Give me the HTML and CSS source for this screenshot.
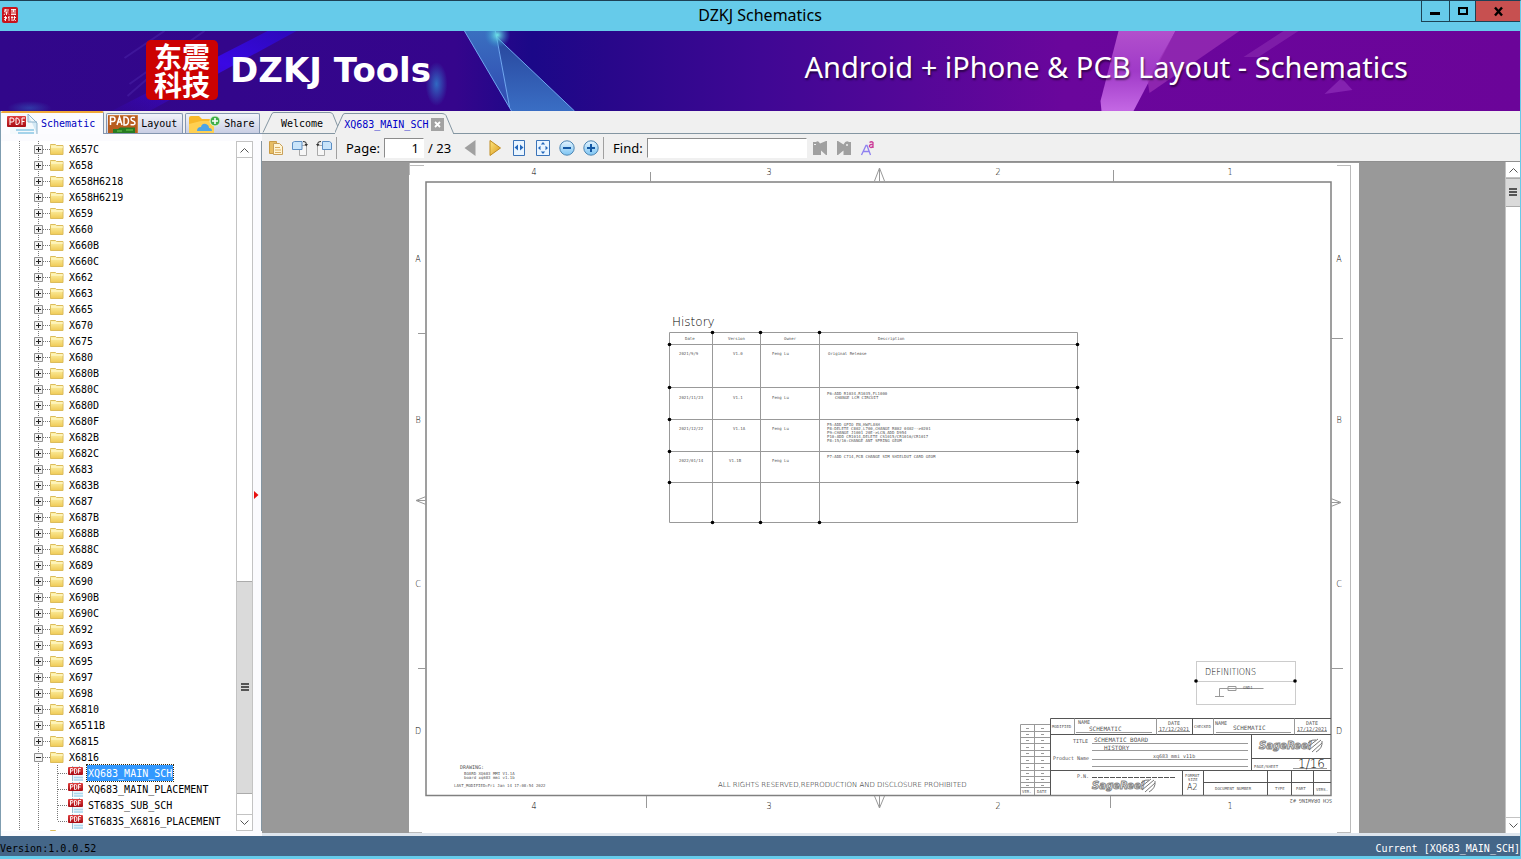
FILE: index.html
```html
<!DOCTYPE html>
<html lang="en">
<head>
  <meta charset="UTF-8">
  <title>DZKJ Schematics</title>
  <meta name="viewport" content="width=device-width,initial-scale=1">
  <link rel="stylesheet" href="styles.css">
</head>
<body>
  <svg class="defs" width="0" height="0" aria-hidden="true">
    <defs>
      <linearGradient id="g-folder" x1="0" y1="0" x2="0" y2="1"><stop offset="0" stop-color="#fff6b0"/><stop offset="1" stop-color="#efca55"/></linearGradient>
      <linearGradient id="g-blue" x1="0" y1="0" x2="0" y2="1"><stop offset="0" stop-color="#e4f4ff"/><stop offset="1" stop-color="#7cc4f2"/></linearGradient>
      <linearGradient id="g-gold" x1="0" y1="0" x2="1" y2="1"><stop offset="0" stop-color="#ffe680"/><stop offset="1" stop-color="#d99a1c"/></linearGradient>
      <linearGradient id="g-red" x1="0" y1="0" x2="0" y2="1"><stop offset="0" stop-color="#e04040"/><stop offset="1" stop-color="#a80c14"/></linearGradient>
    </defs>
    <symbol id="i-folder" viewBox="0 0 14 12">
      <path d="M.5 2.500V1.500h5l1 1h6.500v9H.5z" fill="url(#g-folder)" stroke="#dcbc5c"/>
      <path d="M1 4h12" stroke="#fffbd8"/>
    </symbol>
    <symbol id="i-pdf" viewBox="0 0 16 16">
      <path d="M4 1h7l4 4v11H4z" fill="#edf6fb"/>
      <path d="M11 1l4 4M4.500 1v15" stroke="#9bbccd" fill="none"/>
      <path d="M6 12.500h9M6 15h9" stroke="#a9d8ee" stroke-width="1.500"/>
      <rect x="0" y="2" width="15" height="8" rx="1" fill="url(#g-red)"/>
      <path d="M2.500 8.500v-5h1.500q1 0 1 1.200T4 6H2.500M6.500 3.500v5h1q1.500 0 1.500-2.500T7.500 3.500zM10.500 8.500v-5H13M10.500 6H12.500" stroke="#fff" fill="none" stroke-width=".9"/>
    </symbol>
  </svg>

  <header class="titlebar">
    <svg class="app-icon" width="16" height="16" viewBox="0 0 16 16" aria-hidden="true">
      <rect width="16" height="16" rx="2" fill="#c8141c"/>
      <path d="M2 3h5M4 2L2.500 5h4M4.500 5v3M3 6.500L2 8M6 6.500l1 1M9 2.500h5M9 4h5M11.500 2v3M9 6h5M9 7.500h5M2 10.500h3M3.500 9v5M2 13l3-2M6 10l1 1M7 9v5M9 10.500h2M10 9v5M11.500 10.500H14M12.500 9v3L10.800 14M11.800 12l2 2" stroke="#fff" stroke-width=".9" fill="none"/>
    </svg>
    <h1>DZKJ Schematics</h1>
    <div class="win-buttons">
      <button class="win-btn" aria-label="Minimize"><svg width="27" height="20"><path d="M8 12.500h10" stroke="#000" stroke-width="3"/></svg></button>
      <button class="win-btn" aria-label="Maximize"><svg width="25" height="20"><path d="M9 7h8v6H9z" stroke="#000" stroke-width="2" fill="none"/></svg></button>
      <button class="win-btn close" aria-label="Close"><svg width="44" height="20"><path d="M19 6.500l7 8M26 6.500l-7 8" stroke="#000" stroke-width="2.400"/></svg></button>
    </div>
  </header>

  <div class="banner">
    <svg class="banner-art" viewBox="0 31 1521 80" preserveAspectRatio="xMidYMid slice" aria-hidden="true">
      <defs>
        <linearGradient id="g-banner"><stop offset="0" stop-color="#31078a"/><stop offset=".3" stop-color="#35058c"/><stop offset=".35" stop-color="#1b0888"/><stop offset=".4" stop-color="#28078a"/><stop offset=".5" stop-color="#3f0794"/><stop offset=".6" stop-color="#540798"/><stop offset=".7" stop-color="#6a069c"/><stop offset="1" stop-color="#6b0499"/></linearGradient>
        <linearGradient id="g-beam" x1="1" y1="0" x2="0" y2="1"><stop offset="0" stop-color="#2a0ad8" stop-opacity=".6"/><stop offset=".4" stop-color="#3a08e4"/><stop offset="1" stop-color="#3a08d0" stop-opacity=".1"/></linearGradient>
        <linearGradient id="g-shard" x1="0" y1="0" x2="0" y2="1"><stop offset="0" stop-color="#3a6fc0"/><stop offset="1" stop-color="#3048b0"/></linearGradient>
        <linearGradient id="g-shard2" x1="0" y1="0" x2="0" y2="1"><stop offset="0" stop-color="#27459c"/><stop offset="1" stop-color="#3a6ec4"/></linearGradient>
        <linearGradient id="g-pink" x1="0" y1="0" x2="0" y2="1"><stop offset="0" stop-color="#b250cc"/><stop offset=".5" stop-color="#a03ac8"/><stop offset="1" stop-color="#c468e4"/></linearGradient>
        <radialGradient id="g-glow"><stop offset="0" stop-color="#3074c8" stop-opacity=".9"/><stop offset="1" stop-color="#3074c8" stop-opacity="0"/></radialGradient>
        <radialGradient id="g-spark"><stop offset="0" stop-color="#6fe6e8"/><stop offset="1" stop-color="#3090d0" stop-opacity="0"/></radialGradient>
      </defs>
      <rect y="31" width="1521" height="80" fill="url(#g-banner)"/>
      <path d="M268 31H297L150 111H112z" fill="url(#g-beam)"/>
      <path d="M205 31L130 84M165 31L125 58M188 44L128 96" stroke="#5632b8" stroke-width="2" opacity=".35"/>
      <ellipse cx="30" cy="108" rx="22" ry="7" fill="url(#g-glow)" opacity=".5"/>
      <ellipse cx="437" cy="84" rx="11" ry="22" fill="url(#g-glow)"/>
      <path d="M465 31H496L510 107 512 111z" fill="url(#g-shard)"/>
      <path d="M497 37L575 111H512L510 107z" fill="url(#g-shard2)"/>
      <path d="M465 31L512 111M497 37L575 111M496 31L510 107" stroke="#70a8f0" fill="none"/>
      <circle cx="498" cy="35" r="13" fill="url(#g-spark)"/>
      <path d="M1119 31H1176L1134 111H1102L1101 101z" fill="url(#g-pink)"/>
      <path d="M1176 31H1240L1150 93 1148 80z" fill="#9a30b6" opacity=".75"/>
      <path d="M1284 31H1299L1259 57H1244z" fill="#8626ae" opacity=".7"/>
      <path d="M1325 94L1342 78 1353 90z" fill="#8422b0"/>
    </svg>
    <div class="brand">
      <div class="logo" lang="zh">东震<br>科技</div>
      <span class="brand-name">DZKJ Tools</span>
    </div>
    <span class="slogan">Android + iPhone &amp; PCB Layout - Schematics</span>
  </div>

  <main class="workspace">
    <section class="sidebar">
      <nav class="side-tabs">
        <button class="side-tab active">
          <svg width="32" height="20" viewBox="0 0 32 20"><path d="M4 0h19l8 9v11H4z" fill="#f4f9fc"/><path d="M22 0l9 9v11M22 0v8h9" stroke="#8fb4cc" fill="#d4e9f5"/><path d="M10 16h18M12 19h16" stroke="#a5d3ea" stroke-width="2"/><rect x="1" y="2" width="19" height="11" rx="1" fill="url(#g-red)"/><path d="M4 11V4h2q2 0 2 2t-2 2H4M10 4v6.500h1q2.500 0 2.500-3T11 4zM16 11V4h3M16 7.500h2.500" stroke="#fff" fill="none"/></svg>
          Schematic
        </button>
        <button class="side-tab">
          <svg width="30" height="18" viewBox="0 0 30 18"><rect width="30" height="18" fill="#b85d20"/><path d="M0 0h30v18" stroke="#e5a25c" fill="none"/><path d="M5 18v-4h5l2-1.500h15V18" fill="#287c22"/><path d="M9 16h5M18 15h7" stroke="#70cc50"/><path d="M2.500 10V2H5q2 0 2 2.200T5 6.500H2.500M9 10l2.500-8L14 10M10 7h3M16 2v8h1q3.500 0 3.500-4T17 2zM27 2.500Q23 1.500 23 4q0 1.500 2 2t2 2q0 2.500-4.500 1.500" stroke="#fff" stroke-width="1.500" fill="none"/></svg>
          Layout
        </button>
        <button class="side-tab share">
          <svg width="32" height="18" viewBox="0 0 32 18"><path d="M0 18V3q0-2 2-2h8l3 3h9q3 0 3 3v11z" fill="#f8b82a"/><path d="M0 18V9l12-3h13v12z" fill="#ffd052"/><path d="M8 16q0-4 4-4 1-4 5-3 3 1 3 4 3 0 3 3z" fill="#4ea4e4"/><circle cx="26" cy="6" r="5" fill="#3fae49" stroke="#dff5d8"/><path d="M26 3v6M23 6h6" stroke="#fff" stroke-width="1.600"/></svg>
          Share
        </button>
      </nav>
      <div class="tree-wrap">
        <div class="tree" id="tree"></div>
        <div class="scrollbar">
          <button class="sb-btn" aria-label="Scroll up"><svg width="9" height="6"><path d="M.5 5.500L4.500 1.500l4 4" stroke="#555" fill="none"/></svg></button>
          <div class="sb-space"></div>
          <div class="sb-thumb"></div>
          <div class="sb-end"></div>
          <button class="sb-btn" aria-label="Scroll down"><svg width="9" height="6"><path d="M.5 .5l4 4 4-4" stroke="#555" fill="none"/></svg></button>
        </div>
        <div class="splitter"><svg width="5" height="8"><path d="M0 0l4.500 4L0 8z" fill="#e81010"/></svg></div>
      </div>
    </section>

    <section class="document">
      <nav class="doc-tabs">
        <button class="doc-tab">
          <svg class="doc-tab-edge" width="76" height="22"><path d="M1 21.500L10 2.500Q11 1.500 12 1.500H68q2 0 3 2L76 16" stroke="#8496a2" fill="none"/></svg>
          <span>Welcome</span>
        </button>
        <div class="doc-tab current">
          <svg class="doc-tab-edge" width="120" height="22"><path d="M-1 22.500L8 2.500Q9 1.500 10 1.500H107q3 0 4 2L119 22.500" stroke="#8496a2" fill="#f0f0f0"/></svg>
          <span>XQ683_MAIN_SCH</span>
          <button class="tab-close" aria-label="Close tab"><svg width="13" height="13"><path d="M4 4l5 5M9 4L4 9" stroke="#fff" stroke-width="1.800"/></svg></button>
        </div>
      </nav>

      <div class="toolbar">
        <button class="tool" aria-label="Copy"><svg width="16" height="16"><path d="M1.500 1.500h7v12h-7z" fill="#e7bd62" stroke="#c99b45"/><path d="M5.500 3.500h6l3 3v8h-9z" fill="#fff5d4" stroke="#c9a05a"/><path d="M7 7.500h5M7 10h6M7 12.500h6" stroke="#dcae60"/></svg></button>
        <button class="tool" aria-label="Rotate right"><svg width="16" height="16"><path d="M7.500 5.500h7v10h-7z" fill="#f6f6f6" stroke="#aaa"/><path d="M.5 2.500l2-1h7.500v8H.5z" fill="#c9e4fa" stroke="#5d8fc4"/><path d="M11 1.500q3.500-.5 3.500 3" stroke="#333" fill="none"/><path d="M12.500 4h3.500l-1.700 2.500z" fill="#333"/></svg></button>
        <button class="tool" aria-label="Rotate left"><svg width="16" height="16"><path d="M1.500 5.500h7v10h-7z" fill="#f6f6f6" stroke="#aaa"/><path d="M6.500 1.500h7l2 1.500v6.500h-9z" fill="#c9e4fa" stroke="#5d8fc4"/><path d="M5 1.500q-3.500-.5-3.500 3" stroke="#333" fill="none"/><path d="M0 4h3.500l-1.700 2.500z" fill="#333"/></svg></button>
        <span class="tool-sep"></span>
        <label class="tool-label" for="page">Page:</label>
        <input class="page-input" id="page" type="text" value="1">
        <span class="page-total">/ 23</span>
        <button class="tool" aria-label="Previous page"><svg width="16" height="18"><path d="M12.500 1L1.500 9l11 8z" fill="#a0a0a0"/></svg></button>
        <button class="tool" aria-label="Next page"><svg width="16" height="18"><path d="M3 1.500L13.500 9 3 16.500z" fill="url(#g-gold)" stroke="#c08c20"/></svg></button>
        <button class="tool" aria-label="Fit width"><svg width="16" height="18"><path d="M2.500 1.500h11v15h-11z" fill="#eaf5ff" stroke="#3a73b8"/><path d="M7 5.500v6L3.500 8.500zM9 5.500v6l3.500-3z" fill="#2468bc"/></svg></button>
        <button class="tool" aria-label="Fit page"><svg width="16" height="18"><path d="M1.500 1.500h13v15h-13z" fill="#eaf5ff" stroke="#3a73b8"/><path d="M8 3l2.200 2.500H5.800zM8 15l2.200-2.500H5.800zM3 9l2.500-2.200v4.400zM13 9l-2.500-2.200v4.400z" fill="#2468bc"/></svg></button>
        <button class="tool" aria-label="Zoom out"><svg width="16" height="16"><circle cx="8" cy="8" r="7.200" fill="url(#g-blue)" stroke="#4d86b4"/><path d="M4 8h8" stroke="#1458a4" stroke-width="2"/></svg></button>
        <button class="tool" aria-label="Zoom in"><svg width="16" height="16"><circle cx="8" cy="8" r="7.200" fill="url(#g-blue)" stroke="#4d86b4"/><path d="M4 8h8M8 4v8" stroke="#1458a4" stroke-width="2"/></svg></button>
        <span class="tool-sep"></span>
        <label class="tool-label" for="find">Find:</label>
        <input class="find-input" id="find" type="text">
        <button class="tool" aria-label="Find previous"><svg width="16" height="16"><path d="M1 2h3q2-2 4 1.500L14 1h1v14h-1L9 10.500V15H1z" fill="#a0a0a0"/><path d="M2 4.500h2" stroke="#efefef"/></svg></button>
        <button class="tool" aria-label="Find next"><svg width="16" height="16"><path d="M1 1h1l5.500 3.500Q10-.5 13 2h2v13H7.500v-4.500L2 15H1z" fill="#a0a0a0"/><circle cx="11" cy="5" r="1" fill="#efefef"/></svg></button>
        <button class="tool" aria-label="Match case"><svg width="16" height="16"><path d="M1.500 15L6 5.500h1L10.500 15M3 11.500h6" stroke="#8f80f0" stroke-width="1.300" fill="none"/><path d="M9.500 2.500q2-1.500 3.500 0v5.500M13 4.500h-2q-2 .5-1.500 2.200 1.500 1.800 3.500-.4" stroke="#cc3c98" stroke-width="1.300" fill="none"/></svg></button>
      </div>

      <div class="viewer">
        <div class="canvas">
          <svg class="sheet" id="sheet" width="950" height="670" viewBox="409 163 950 670" role="img" aria-label="History sheet">
            <path class="faint" d="M409 165.500h15M1337 165.500h14M1350.500 165V833M1337 832.500h14M409 832.500h13M409.500 163v12M1350.500 165v8"/>
            <path class="frame" d="M426 182H1331V795.500H426z"/>
            <!-- rulers -->
            <path class="thin" d="M650.500 172v10M1113.500 170v12M646.500 796v12M1110.500 796v12M418 333.500h8M418 668.500h8M1331 338.500h12M1331 668.500h12M879.500 168v13M879.500 168l-5 13M879.500 168l5 13M879.500 808v-12M879.500 808l-5-12M879.500 808l5-12M416 500.500h10M416 500.500l10-4M416 500.500l10 4M1341 502.500h-10M1341 502.500l-10-4M1341 502.500l-10 4"/>
            <g class="ruler">
              <text x="534" y="175">4</text><text x="769" y="175">3</text><text x="998" y="175">2</text><text x="1230" y="175">1</text>
              <text x="534" y="809">4</text><text x="769" y="809">3</text><text x="998" y="809">2</text><text x="1230" y="809">1</text>
              <text x="418" y="262">A</text><text x="418" y="423">B</text><text x="418" y="587">C</text><text x="418" y="734">D</text>
              <text x="1339" y="262">A</text><text x="1339" y="423">B</text><text x="1339" y="587">C</text><text x="1339" y="734">D</text>
            </g>

            <!-- history table -->
            <text class="t12" x="672" y="326">History</text>
            <path class="grid" d="M669.500 332.500H1077.500V522.500H669.500zM712.500 332.500v190M760.500 332.500v190M819.500 332.500v190M669.500 344.500h408M669.500 387.500h408M669.500 419.500h408M669.500 451.500h408M669.500 482.500h408"/>
            <g id="dots"></g>
            <g class="t4">
              <text x="685" y="340">Date</text><text x="728" y="340">Version</text><text x="784" y="340">Owner</text><text x="878" y="340">Description</text>
              <text x="679" y="355">2021/9/9</text><text x="733" y="355">V1.0</text><text x="772" y="355">Feng Lu</text><text x="828" y="355">Original Release</text>
              <text x="679" y="399">2021/11/23</text><text x="733" y="399">V1.1</text><text x="772" y="399">Feng Lu</text>
              <text x="827" y="395">P6:ADD R1034,R1035,FL1000</text><text x="835" y="399">CHANGE LCM CIRCUIT</text>
              <text x="679" y="430">2021/12/22</text><text x="733" y="430">V1.1A</text><text x="772" y="430">Feng Lu</text>
              <text x="827" y="426">P5:ADD GPIO EN,HWFLASH</text><text x="827" y="430">P8:DELETE C802,L700,CHANGE R802 0402--&gt;0201</text><text x="827" y="434">P9:CHANGE J1001 20E-&gt;LCN,ADD D954</text><text x="827" y="438">P10:ADD CR1014,DELETE CS1015/CR1016/CR1017</text><text x="827" y="442">P8:15/16:CHANGE ANT SPRING GEOM</text>
              <text x="679" y="462">2022/01/14</text><text x="729" y="462">V1.1B</text><text x="772" y="462">Feng Lu</text><text x="827" y="458">P7:ADD C714,PCB CHANGE SIM SHIELDUT CARD GEOM</text>
            </g>

            <!-- notes -->
            <text class="t5" x="460" y="769">DRAWING:</text>
            <g class="t4"><text x="464" y="775">BOARD XQ683 MMI V1.1A</text><text x="464" y="779">board xq683 mmi v1.1b</text><text x="454" y="787">LAST_MODIFIED=Fri Jan 14 17:08:54 2022</text></g>
            <text class="t7" x="718" y="787">ALL RIGHTS RESERVED,REPRODUCTION AND DISCLOSURE PROHIBITED</text>

            <!-- definitions -->
            <path class="dotted" d="M1196.500 661.500h99v43h-99zM1196.500 681.500h99"/>
            <circle cx="1196" cy="681" r="1.800"/><circle cx="1295" cy="681" r="1.800"/>
            <text class="t8" x="1205" y="675">DEFINITIONS</text>
            <path class="thin" d="M1219.500 696v-7.500h44M1215 696.500h9M1228 686.500h8v4h-8z"/>
            <text class="t4" x="1243" y="689">GND1</text>

            <!-- revision column -->
            <path class="thin" d="M1020.500 724.500h30M1020.500 724.500V795M1034.500 724.500V795M1020.500 731.500h30M1020.500 737.500h30M1020.500 743.500h30M1020.500 750.500h30M1020.500 756.500h30M1020.500 763.500h30M1020.500 770.500h30M1020.500 776.500h30M1020.500 782.500h30M1020.500 787.500h30"/>
            <path class="thin" d="M1026 728.500h3M1041 728.500h3M1026 734.500h3M1041 734.500h3M1026 740.500h3M1041 740.500h3M1026 747.500h3M1041 747.500h3M1026 753.500h3M1041 753.500h3M1026 760.500h3M1041 760.500h3M1026 767.500h3M1041 767.500h3M1026 773.500h3M1041 773.500h3M1026 779.500h3M1041 779.500h3M1026 785.500h3M1041 785.500h3"/>
            <g class="t4"><text x="1022" y="793">VER.</text><text x="1037" y="793">DATE</text></g>

            <!-- title block -->
            <path class="block" d="M1050.500 718.500H1331M1050.500 718.500V795M1050.500 734.500H1331M1050.500 770.500H1331M1192.500 718.500v16M1251.500 734.500v36M1251.500 758.500H1331M1182.500 770.500V795M1203.500 770.500V795M1203.500 782.500H1331M1267.500 770.500V795M1291.500 770.500V795M1313.500 770.500V795"/>
            <path class="thin" d="M1074.500 718.500v16M1156.500 718.500v16M1213.500 718.500v16M1294.500 718.500v16M1076 732.500h76M1158 731.500h32M1216 732.500h75M1297 731.500h30M1092 743.500h156M1092 750.500h156M1092 759.500h156M1092 766.500h156M1293 768.500h34"/>
            <path class="dashes-h" d="M1092 777.500h84"/>
            <g class="t4">
              <text x="1052" y="728">MODIFIED</text><text x="1194" y="728">CHECKED</text><text x="1254" y="768">PAGE/SHEET</text>
              <text x="1185" y="777">FORMAT</text><text x="1188" y="781">SIZE</text><text x="1215" y="790">DOCUMENT NUMBER</text><text x="1275" y="790">TYPE</text><text x="1296" y="790">PART</text><text x="1316" y="791">VERS.</text>
            </g>
            <g class="t5">
              <text x="1078" y="724">NAME</text><text x="1168" y="725">DATE</text><text x="1215" y="725">NAME</text><text x="1306" y="725">DATE</text>
              <text x="1159" y="731">17/12/2021</text><text x="1297" y="731">17/12/2021</text>
              <text x="1073" y="743">TITLE</text><text x="1053" y="760">Product Name</text><text x="1153" y="758">xq683_mmi_v11b</text><text x="1077" y="778">P.N.</text>
            </g>
            <g class="t6"><text x="1089" y="731">SCHEMATIC</text><text x="1233" y="730">SCHEMATIC</text><text x="1094" y="742">SCHEMATIC BOARD</text><text x="1104" y="750">HISTORY</text></g>
            <text class="t8" x="1187" y="790">A2</text>
            <text class="t12" x="1298" y="768">1/16</text>
            <g class="mark"><text x="1259" y="749">SageReel</text><text x="1092" y="789">SageReel</text></g>
            <path class="mark-lines" d="M1309 746l9-7M1309 750l12-10M1312 752l10-9M1308 743q4-4 8-3M1322 741q1 7-6 11M1142 786l9-7M1142 790l12-10M1145 792l10-9M1141 783q4-4 8-3M1155 781q1 7-6 11"/>
            <text class="t5" x="1332" y="799" transform="rotate(180 1332 799)">SCH DRAWING #2</text>
          </svg>
        </div>
        <div class="scrollbar doc-scroll">
          <button class="sb-btn" aria-label="Page up"><svg width="9" height="6"><path d="M.5 5.500L4.500 1.500l4 4" stroke="#555" fill="none"/></svg></button>
          <div class="sb-thumb short"></div>
          <div class="sb-rest"></div>
          <button class="sb-btn" aria-label="Page down"><svg width="9" height="6"><path d="M.5 .5l4 4 4-4" stroke="#555" fill="none"/></svg></button>
        </div>
      </div>
    </section>
  </main>

  <footer class="statusbar">
    <span class="version">Version:1.0.0.52</span>
    <span class="current-file">Current [XQ683_MAIN_SCH]</span>
  </footer>

  <script>
    const folders = ["X657C","X658","X658H6218","X658H6219","X659","X660","X660B","X660C","X662","X663","X665","X670","X675",
      "X680","X680B","X680C","X680D","X680F","X682B","X682C","X683","X683B","X687","X687B","X688B","X688C","X689","X690",
      "X690B","X690C","X692","X693","X695","X697","X698","X6810","X6511B","X6815","X6816"];
    const files = ["XQ683_MAIN_SCH","XQ683_MAIN_PLACEMENT","ST683S_SUB_SCH","ST683S_X6816_PLACEMENT"];
    const tree = document.getElementById("tree");

    function folderRow(name) {
      const open = name === "X6816";
      return `<div class="row"><button class="expander" aria-label="${open ? "Collapse" : "Expand"} ${name}"><svg width="9" height="9"><path d="M.5 .5h8v8h-8z" fill="#f3f3f3" stroke="#919191"/><path d="M2 4.500h5${open ? "" : "M4.500 2v5"}" stroke="#222"/></svg></button>` +
        `<i class="link"></i><svg width="14" height="12"><use href="#i-folder"/></svg><span class="name">${name}</span></div>`;
    }
    function fileRow(name, i) {
      return `<div class="row file"><i class="link"></i><svg width="16" height="16"><use href="#i-pdf"/></svg>` +
        `<span class="name${i === 0 ? " selected" : ""}">${name}</span></div>`;
    }
    tree.innerHTML = folders.map(folderRow).join("") +
      `<div class="children">${files.map(fileRow).join("")}</div>` +
      `<div class="row next"><svg width="14" height="12"><use href="#i-folder"/></svg></div>`;

    // junction dots of the history table
    const dots = [];
    [712.5, 760.5, 819.5].forEach(x => [332.5, 522.5].forEach(y => dots.push([x, y])));
    [344.5, 387.5, 419.5, 451.5, 482.5].forEach(y => [669.5, 1077.5].forEach(x => dots.push([x, y])));
    document.getElementById("dots").innerHTML = dots.map(d => `<circle cx="${d[0]}" cy="${d[1]}" r="1.800"/>`).join("");
  </script>
</body>
</html>
```
FILE: styles.css
```css
* {
  box-sizing: border-box;
}
body {
  margin: 0;
  height: 100vh;
  display: flex;
  flex-direction: column;
  overflow: hidden;
  background: #f0f0f0;
  border-top: 1px solid #1d4055;
  border-right: 1px solid #66cbea;
  border-bottom: 3px solid #66cbea;
  font-family: "DejaVu Sans Mono", "Liberation Mono", monospace;
  font-size: 10px;
  line-height: 16px;
  color: #000;
}
button {
  border: 0;
  padding: 0;
  background: none;
  color: inherit;
  font: inherit;
}
svg {
  display: block;
  flex: none;
}
.defs {
  position: absolute;
}

/* window frame */
.titlebar {
  height: 30px;
  flex: none;
  display: flex;
  align-items: flex-start;
  background: #66cbea;
}
.app-icon {
  margin: 6px 0 0 2px;
}
.titlebar h1 {
  flex: 1;
  margin: 0;
  padding-left: 81px;
  text-align: center;
  font: 16px/28px "Noto Sans", sans-serif;
}
.win-buttons {
  display: flex;
  height: 21px;
  border: 1px solid #1c4254;
  border-width: 0 0 1px 1px;
}
.win-btn + .win-btn {
  border-left: 1px solid #1c4254;
}
.win-btn.close {
  background: #c75050;
}

/* banner */
.banner {
  position: relative;
  height: 80px;
  flex: none;
  display: flex;
  align-items: center;
  justify-content: space-between;
  padding: 0 112px 0 146px;
  overflow: hidden;
  color: #fff;
}
.banner-art {
  position: absolute;
  inset: 0;
  width: 100%;
  height: 100%;
}
.brand {
  position: relative;
  display: flex;
  align-items: center;
  gap: 12px;
  padding-bottom: 2px;
}
.logo {
  width: 72px;
  height: 60px;
  padding-top: 2px;
  border-radius: 5px;
  background: #cc0202;
  text-align: center;
  font: bold 28px/28px "Noto Sans CJK SC", sans-serif;
}
.brand-name {
  font: bold 34px/60px "DejaVu Sans", sans-serif;
}
.slogan {
  position: relative;
  padding-bottom: 8px;
  font: 29px/40px "Noto Sans", sans-serif;
  text-shadow: 1px 2px 2px #0008;
}

/* workspace */
.workspace {
  flex: 1;
  min-height: 0;
  display: flex;
}
.sidebar {
  width: 262px;
  flex: none;
  display: flex;
  flex-direction: column;
  border-left: 1px solid #7f9db0;
}
.side-tabs {
  display: flex;
  align-items: flex-end;
  gap: 2px;
  height: 23px;
  border-bottom: 1px solid #8496b0;
}
.side-tab {
  height: 20px;
  display: flex;
  align-items: center;
  gap: 3px;
  padding: 0 5px 0 1px;
  overflow: hidden;
  border: 1px solid #8496b0;
  border-bottom: 0;
  border-radius: 2px 2px 0 0;
  background: linear-gradient(#f2f4fa, #c9cee4);
}
.side-tab.active {
  height: 23px;
  padding: 0 8px 0 5px;
  border-top: 2px solid #f0a838;
  border-left: 0;
  background: #fcfcff;
  color: #0000c0;
  margin-bottom: -1px;
}
.side-tab.share {
  padding-left: 3px;
}
.tree-wrap {
  flex: 1;
  min-height: 0;
  display: flex;
  padding: 7px 0 5px;
  background: #fbfbfe;
}
.tree {
  flex: 1;
  overflow: hidden;
  background:
    repeating-linear-gradient(#777 0 1px, transparent 1px 2px) 18px 0 / 1px 100% no-repeat,
    repeating-linear-gradient(#777 0 1px, transparent 1px 2px) 37px 0 / 1px 100% no-repeat,
    #fff;
}
.row {
  height: 16px;
  display: flex;
  align-items: center;
  padding-left: 33px;
}
.link {
  width: 7px;
  height: 1px;
  background: repeating-linear-gradient(90deg, #777 0 1px, transparent 1px 2px);
}
.name {
  height: 16px;
  margin-left: 4px;
  padding: 1px 1px 0;
  line-height: 15px;
  white-space: nowrap;
}
.children {
  background: repeating-linear-gradient(#777 0 1px, transparent 1px 2px) 56px 0 / 1px 56px no-repeat;
}
.row.file {
  padding-left: 57px;
}
.file .link {
  width: 10px;
}
.file .name {
  margin-left: 3px;
}
.name.selected {
  background: #3399ff;
  color: #fff;
  outline: 1px dotted #352a10;
}
.row.next {
  align-items: flex-start;
  padding-left: 49px;
}
.scrollbar {
  width: 17px;
  flex: none;
  display: flex;
  flex-direction: column;
  border: 1px solid #c3c3c3;
  background: #fff;
}
.sb-btn {
  height: 16px;
  flex: none;
  display: flex;
  align-items: center;
  justify-content: center;
  border-bottom: 1px solid #c3c3c3;
}
.sb-btn:last-child {
  border-top: 1px solid #c3c3c3;
  border-bottom: 0;
}
.sb-space {
  flex: 426;
}
.sb-thumb {
  flex: 213;
  display: flex;
  align-items: center;
  justify-content: center;
  border: 1px solid #ababab;
  border-width: 1px 0;
  background: #dadada;
}
.sb-thumb::before {
  content: "";
  width: 8px;
  height: 8px;
  background: repeating-linear-gradient(#555 0 2px, transparent 2px 3px);
}
.sb-end {
  flex: 20;
}
.splitter {
  width: 9px;
  padding-left: 1px;
  display: flex;
  align-items: center;
  border-right: 1px solid #8496a2;
  padding-top: 17px;
}

/* document side */
.document {
  flex: 1;
  min-width: 0;
  display: flex;
  flex-direction: column;
}
.doc-tabs {
  display: flex;
  align-items: flex-end;
  height: 23px;
  flex: none;
  border-bottom: 1px solid #8496a2;
}
.doc-tab {
  position: relative;
  height: 22px;
  display: flex;
  align-items: center;
  padding: 4px 12px 0 19px;
}
.doc-tab-edge {
  position: absolute;
  left: 0;
  top: 0;
}
.doc-tab span,
.tab-close {
  position: relative;
}
.doc-tab.current {
  height: 22px;
  margin-bottom: -1px;
  padding: 3px 0 0 9px;
  color: #0000c8;
}
.doc-tab.current span {
  margin-right: 3px;
}
.tab-close {
  background: #a2a2a2;
}
.toolbar {
  height: 28px;
  flex: none;
  display: flex;
  align-items: center;
  padding-left: 2px;
  border-bottom: 1px solid #8f8f8f;
  font: 13px/20px "Noto Sans", sans-serif;
}
.tool {
  width: 24px;
  height: 24px;
  display: flex;
  align-items: center;
  justify-content: center;
}
.tool-sep {
  width: 1px;
  height: 22px;
  background: #a0a0a0;
}
.tool-label {
  margin: 0 4px 0 9px;
}
.toolbar input {
  height: 20px;
  padding: 0 4px;
  border: 1px solid #8c8c8c;
  border-right-color: #fff;
  border-bottom-color: #fff;
  background: #fff;
  font: inherit;
}
.toolbar .page-input {
  width: 40px;
  text-align: right;
}
.page-total {
  margin: 0 8px 0 4px;
}
.toolbar .find-input {
  width: 160px;
  margin-right: 1px;
}
.viewer {
  flex: 1;
  min-height: 0;
  display: flex;
  background: #999;
  border-bottom: 3px solid #dfe6ee;
}
.canvas {
  flex: 1;
  display: flex;
  justify-content: center;
  overflow: hidden;
  padding-top: 1px;
}
.doc-scroll {
  width: 15px;
  border-width: 0 0 0 1px;
}
.sb-thumb.short {
  flex: 27;
}
.sb-rest {
  flex: 614;
}

/* drawing sheet */
.sheet {
  background: #fff;
  font-family: "DejaVu Sans Mono", monospace;
}
.sheet path {
  fill: none;
  stroke: #999;
}
.sheet text {
  fill: #555;
}
.sheet circle {
  fill: #000;
}
.sheet .frame {
  stroke: #808080;
  stroke-width: 1.5;
}
.sheet .faint {
  stroke: #bbb;
}
.sheet .grid {
  stroke: #999;
}
.sheet .block {
  stroke: #555;
}
.sheet .dotted {
  stroke: #999;
  stroke-dasharray: 1 1;
}
.sheet .dashes-h {
  stroke: #555;
  stroke-dasharray: 5 1;
}
.ruler,
.t7,
.t8,
.t12 {
  font-family: "DejaVu Sans Light", "DejaVu Sans", sans-serif;
  font-weight: 200;
}
.sheet .ruler text,
.sheet .t7,
.sheet .t8,
.sheet .t12 {
  fill: #000;
}
.ruler {
  font-size: 8px;
  text-anchor: middle;
}
.t4 { font-size: 4px; }
.t5 { font-size: 5px; }
.t6 { font-size: 6px; }
.t7 { font-size: 7px; }
.t8 { font-size: 8px; }
.t12 { font-size: 12px; }
.sheet .mark text {
  font: italic bold 10px "DejaVu Sans", sans-serif;
  fill: #fff;
  stroke: #888;
  stroke-width: 1px;
}
.sheet .mark-lines {
  stroke: #777;
}

/* status bar */
.statusbar {
  height: 20px;
  flex: none;
  display: flex;
  justify-content: space-between;
  align-items: flex-end;
  overflow: hidden;
  background: #446688;
  line-height: 14px;
}
.current-file {
  color: #fff;
}
```
